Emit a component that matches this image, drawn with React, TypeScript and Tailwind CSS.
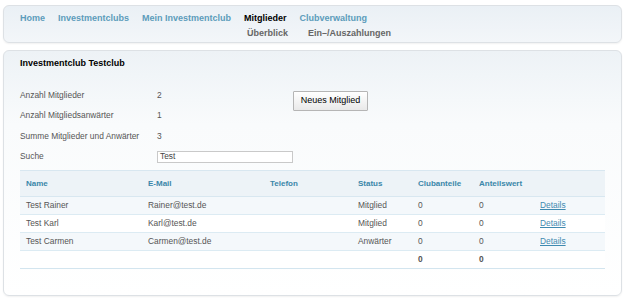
const nav = [
  { label: "Home", active: false },
  { label: "Investmentclubs", active: false },
  { label: "Mein Investmentclub", active: false },
  { label: "Mitglieder", active: true },
  { label: "Clubverwaltung", active: false },
];

const stats = [
  { label: "Anzahl Mitglieder", value: "2" },
  { label: "Anzahl Mitgliedsanwärter", value: "1" },
  { label: "Summe Mitglieder und Anwärter", value: "3" },
];

const members = [
  { name: "Test Rainer", mail: "Rainer@test.de", status: "Mitglied" },
  { name: "Test Karl", mail: "Karl@test.de", status: "Mitglied" },
  { name: "Test Carmen", mail: "Carmen@test.de", status: "Anwärter" },
];

export default function App() {
  return (
    <div className="w-[625px] h-[298px] bg-white px-[3px] pt-[5px] font-['Liberation_Sans',Arial,sans-serif] overflow-hidden">
      {/* Navigation */}
      <div className="h-[38px] rounded-[6px] border border-[#dde1e5] bg-gradient-to-b from-[#eaf0f5] to-[#f3f6f9] shadow-[0_1px_2px_rgba(0,0,0,0.06)] pl-[16px] pt-[5px]">
        <div className="flex h-[15px] items-center">
          {nav.map((item) => (
            <span
              key={item.label}
              className={`mr-[13px] text-[9px] font-bold ${item.active ? "text-black" : "text-[#5c9cbb]"}`}
            >
              {item.label}
            </span>
          ))}
        </div>
        <div className="flex h-[15px] items-center pl-[227px] text-[9px] font-bold text-[#666]">
          <span className="mr-[20px]">Überblick</span>
          <span>Ein–/Auszahlungen</span>
        </div>
      </div>

      {/* Content panel */}
      <div className="mt-[7px] h-[246px] rounded-[6px] border border-[#dde1e5] bg-gradient-to-b from-[#edf2f6] via-[#f9fbfc] via-[30%] to-white shadow-[0_1px_2px_rgba(0,0,0,0.06)] pl-[16px] pr-[16px]">
        <div className="pt-[4px] h-[22px] flex items-center text-[9px] font-bold text-black">
          Investmentclub Testclub
        </div>

        <div className="mt-[12px] flex">
          <div className="w-[273px]">
            {stats.map((s) => (
              <div key={s.label} className="flex h-[20.5px] items-center text-[8.4px] text-[#555]">
                <span className="w-[137px]">{s.label}</span>
                <span>{s.value}</span>
              </div>
            ))}
            <div className="flex h-[20.5px] items-center text-[8.4px] text-[#555]">
              <span className="w-[137px]">Suche</span>
              <div className="h-[12px] w-[136px] border border-[#c9c9c9] bg-white pl-[2px] flex items-center text-[8.4px] text-[#444]">
                Test
              </div>
            </div>
          </div>
          <div className="pt-[1px]">
            <button className="h-[20px] w-[75px] border border-[#b5b5b5] bg-gradient-to-b from-white to-[#e9e9e9] text-[9px] text-black rounded-[1px]">
              Neues Mitglied
            </button>
          </div>
        </div>

        {/* Members table */}
        <table className="mt-[3px] w-[585px] table-fixed border-collapse text-[8.4px] text-[#555]">
          <colgroup>
            <col className="w-[122px]" />
            <col className="w-[122px]" />
            <col className="w-[88px]" />
            <col className="w-[60px]" />
            <col className="w-[61px]" />
            <col className="w-[61px]" />
            <col className="w-[71px]" />
          </colgroup>
          <thead>
            <tr className="h-[26px] bg-[#edf3f7] border-t border-b border-[#d8e7f0] text-left text-[8px] text-[#3b87a9] font-bold">
              <th className="pl-[6px]">Name</th>
              <th className="pl-[6px]">E-Mail</th>
              <th className="pl-[6px]">Telefon</th>
              <th className="pl-[6px]">Status</th>
              <th className="pl-[6px]">Clubanteile</th>
              <th className="pl-[6px]">Anteilswert</th>
              <th></th>
            </tr>
          </thead>
          <tbody>
            {members.map((m, i) => (
              <tr
                key={m.name}
                className={`h-[18px] border-b border-[#dcebf3] ${i % 2 === 0 ? "bg-[#f4f8fb]" : "bg-white"}`}
              >
                <td className="pl-[6px]">{m.name}</td>
                <td className="pl-[6px]">{m.mail}</td>
                <td className="pl-[6px]"></td>
                <td className="pl-[6px]">{m.status}</td>
                <td className="pl-[6px]">0</td>
                <td className="pl-[6px]">0</td>
                <td className="pl-[6px] text-[#3f8ab0]">
                  <a href="#" className="text-[#3f8ab0]! underline">Details</a>
                </td>
              </tr>
            ))}
            <tr className="h-[18px] border-t border-b border-[#d3e5ef] bg-white">
              <td></td>
              <td></td>
              <td></td>
              <td></td>
              <td className="pl-[6px] font-bold text-[#555]">0</td>
              <td className="pl-[6px] font-bold text-[#555]">0</td>
              <td></td>
            </tr>
          </tbody>
        </table>
      </div>
    </div>
  );
}
